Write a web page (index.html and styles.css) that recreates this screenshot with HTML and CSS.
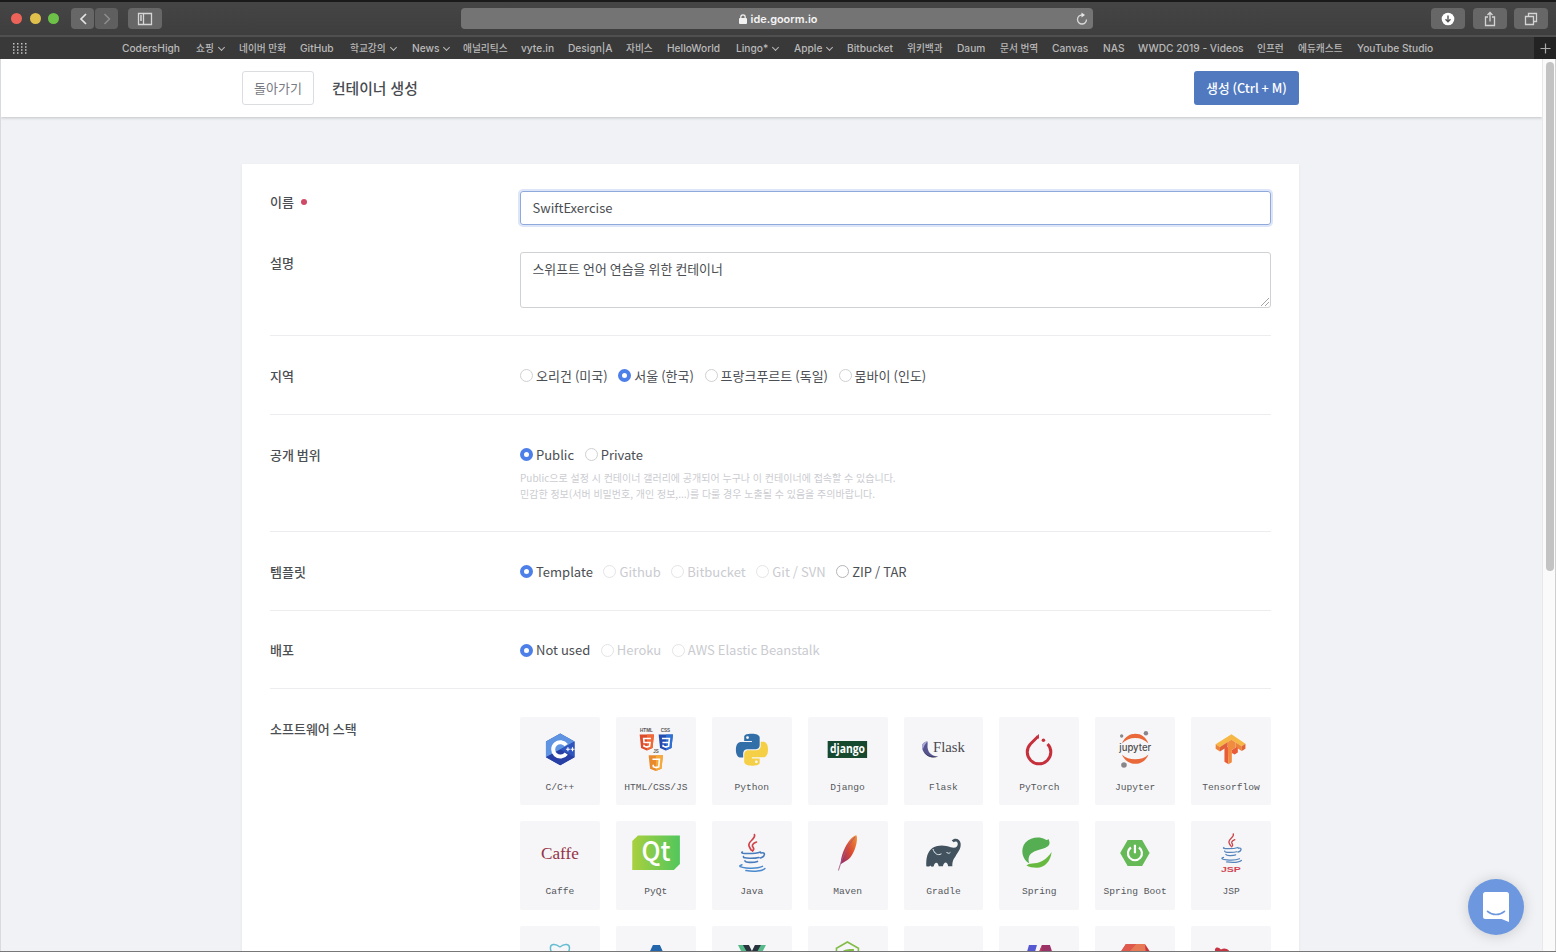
FILE: index.html
```html
<!DOCTYPE html>
<html lang="ko">
<head>
<meta charset="utf-8">
<title>컨테이너 생성</title>
<link rel="stylesheet" href="styles.css">
</head>
<body>
<div class="window">
  <div class="toolbar">
    <div class="lights"><i class="light red"></i><i class="light yellow"></i><i class="light green"></i></div>
    <div class="nav">
      <span class="tbtn nav-btn"><svg width="22" height="20" viewBox="0 0 22 20"><path d="M14 5l-5 5 5 5" fill="none" stroke="#e4e4e4" stroke-width="1.7"/></svg></span>
      <span class="tbtn nav-btn"><svg width="22" height="20" viewBox="0 0 22 20"><path d="M8.500 5l5 5-5 5" fill="none" stroke="#8d8d8d" stroke-width="1.5"/></svg></span>
    </div>
    <span class="tbtn side-btn"><svg width="16" height="14" viewBox="0 0 16 14" fill="none" stroke="#d6d6d6"><path d="M1.500 1.500h13v11h-13zM6.500 1.500v11M3 4h2M3 6h2M3 8h2" stroke-width="1.300"/></svg></span>
    <div class="address">
      <span class="url"><svg width="8" height="10" viewBox="0 0 8 10"><rect y="4" width="8" height="6" rx="1" fill="#f2f2f2"/><path d="M1.800 4.500V3a2.200 2.200 0 0 1 4.400 0v1.500" fill="none" stroke="#f2f2f2" stroke-width="1.200"/></svg>ide.goorm.io</span>
      <svg class="reload" width="12" height="14" viewBox="0 0 12 14"><path d="M10.500 7.500A4.500 4.500 0 1 1 6 3h1" fill="none" stroke="#d8d8d8" stroke-width="1.300"/><path d="M5.500.5L9 3 5.500 5.500z" fill="#e6e6e6"/></svg>
    </div>
    <div class="tools">
      <span class="tbtn tool"><svg width="14" height="14" viewBox="0 0 14 14"><circle cx="7" cy="7" r="6.300" fill="#fff"/><path d="M7 3.500v6M4.500 7.300L7 9.800l2.500-2.500" fill="none" stroke="#555" stroke-width="1.400"/></svg></span>
      <span class="tbtn tool"><svg width="14" height="16" viewBox="0 0 14 16" fill="none" stroke="#d4d4d4" stroke-width="1.300"><path d="M5 6H2.500v8.500h9V6H9M7 10.500V1.500M4.500 4L7 1.500 9.500 4"/></svg></span>
      <span class="tbtn tool"><svg width="14" height="14" viewBox="0 0 14 14" fill="none" stroke="#d4d4d4" stroke-width="1.300"><path d="M1.500 4.500h8v8h-8zM4.500 4.500v-3h8v8h-3"/></svg></span>
    </div>
  </div>

  <div class="bookbar">
    <svg class="dots" width="15" height="11" viewBox="0 0 15 11"><path d="M1 .8h14M1 3.900h14M1 7h14M1 10.100h14" stroke="#c4c4c4" stroke-width="1.500" stroke-dasharray="1.500 2.500"/></svg>
    <nav class="bookmarks">
      <span>CodersHigh</span><span class="ko">쇼핑<b class="chev"></b></span><span class="ko">네이버 만화</span><span>GitHub</span><span class="ko">학교강의<b class="chev"></b></span><span>News<b class="chev"></b></span><span class="ko">애널리틱스</span><span>vyte.in</span><span>Design|A</span><span class="ko">자비스</span><span>HelloWorld</span><span>Lingo*<b class="chev"></b></span><span>Apple<b class="chev"></b></span><span>Bitbucket</span><span class="ko">위키백과</span><span>Daum</span><span class="ko">문서 번역</span><span>Canvas</span><span>NAS</span><span>WWDC 2019 - Videos</span><span class="ko">인프런</span><span class="ko">에듀캐스트</span><span>YouTube Studio</span>
    </nav>
    <span class="newtab"><svg width="11" height="11" viewBox="0 0 11 11"><path d="M5.500.5v10M.5 5.500h10" stroke="#aaa" stroke-width="1.200"/></svg></span>
  </div>

  <div class="viewport">
    <div class="page">
      <header class="header">
        <button class="back">돌아가기</button>
        <h1 class="title">컨테이너 생성</h1>
        <button class="create">생성 (Ctrl + M)</button>
      </header>

      <main class="card">
        <section class="basic">
          <div class="row name-row"><label class="label">이름<i class="req"></i></label><div class="input focus">SwiftExercise</div></div>
          <div class="row"><label class="label">설명</label><div class="input area">스위프트 언어 연습을 위한 컨테이너<svg class="grip" width="8" height="8" viewBox="0 0 8 8"><path d="M0 8l8-8M4 8l4-4" stroke="#999" stroke-width=".9"/></svg></div></div>
        </section>
        <section class="row option region">
          <label class="label">지역</label>
          <div class="radios"><span class="radio">오리건 (미국)</span><span class="radio on">서울 (한국)</span><span class="radio">프랑크푸르트 (독일)</span><span class="radio">뭄바이 (인도)</span></div>
        </section>
        <section class="row option visibility">
          <label class="label">공개 범위</label>
          <div>
            <div class="radios"><span class="radio on">Public</span><span class="radio">Private</span></div>
            <p class="help">Public으로 설정 시 컨테이너 갤러리에 공개되어 누구나 이 컨테이너에 접속할 수 있습니다.<br>민감한 정보(서버 비밀번호, 개인 정보,...)를 다룰 경우 노출될 수 있음을 주의바랍니다.</p>
          </div>
        </section>
        <section class="row option">
          <label class="label">템플릿</label>
          <div class="radios"><span class="radio on">Template</span><span class="radio off">Github</span><span class="radio off">Bitbucket</span><span class="radio off">Git / SVN</span><span class="radio strong">ZIP / TAR</span></div>
        </section>
        <section class="row option">
          <label class="label">배포</label>
          <div class="radios"><span class="radio on">Not used</span><span class="radio off">Heroku</span><span class="radio off">AWS Elastic Beanstalk</span></div>
        </section>
        <section class="row stack">
          <label class="label">소프트웨어 스택</label>
          <div class="tiles">
            <div class="tile"><svg class="logo" viewBox="0 0 80 60">
              <path d="M40.300 16.500L54.600 24.500v15.800L40.300 48.300 26 40.300V24.500z" fill="#2c4fae"/>
              <path d="M40.300 16.500L54.600 24.500 26 40.300V24.500z" fill="#5f94e2"/>
              <path d="M54.600 24.500v15.800L40.300 32.500z" fill="#2f55bd"/><path d="M26 40.300l14.300-7.800 14.300 7.800-14.300 8z" fill="#2840a5"/>
              <path d="M46.300 28.200a7.200 7.200 0 1 0 0 8.400" fill="none" stroke="#fff" stroke-width="4"/>
              <path d="M46 32.300h4M48 30.300v4M50.600 32.300h4M52.600 30.300v4" stroke="#fff" stroke-width="1.100"/></svg><span>C/C++</span></div>
            <div class="tile"><svg class="logo" viewBox="0 0 80 60">
              <text x="30.500" y="14.500" class="mini" textLength="13" lengthAdjust="spacingAndGlyphs">HTML</text><text x="49.500" y="14.500" class="mini" textLength="9.500" lengthAdjust="spacingAndGlyphs">CSS</text><text x="40" y="36.500" class="mini">JS</text>
              <path d="M23.700 17.500H38l-1.400 13.600-5.800 2.300-5.700-2.300z" fill="#dd4b2b"/><path d="M31 17.500h7l-1.400 13.600-5.600 2.300z" fill="#ef6a38"/>
              <path d="M35 21.500h-7.300l.4 4h6l-.5 3.700-2.800.9-2.700-.9-.1-1.400" fill="none" stroke="#fff" stroke-width="1.600"/>
              <path d="M42.700 17.500H57l-1.400 13.600-5.800 2.300-5.700-2.300z" fill="#244bb0"/><path d="M50 17.500h7l-1.400 13.600-5.600 2.300z" fill="#2f70d5"/>
              <path d="M46 21.500h7.500l-.8 7.700-2.800.9-2.700-.9-.1-1.400M46.500 25.500H53" fill="none" stroke="#fff" stroke-width="1.600"/>
              <path d="M32.700 38.300H47l-1.400 13.500-5.800 2.300-5.700-2.300z" fill="#e88b2e"/><path d="M40 38.300h7l-1.400 13.500-5.600 2.300z" fill="#f6aa3c"/>
              <path d="M36.500 42.300h7l-.7 7.500-2.700.8-2.700-.8-.1-2" fill="none" stroke="#fff" stroke-width="1.600"/></svg><span>HTML/CSS/JS</span></div>
            <div class="tile"><svg class="logo" viewBox="0 0 80 60"><g transform="translate(24 16.700) scale(1.333)">
              <path fill="#326fa8" d="M14.250.18l.9.2.73.26.59.3.45.32.34.34.25.34.16.33.1.3.04.26.02.2-.01.13V8.500l-.05.63-.13.55-.21.46-.26.38-.3.31-.33.25-.35.19-.35.14-.33.1-.3.07-.26.04-.21.02H8.770l-.69.05-.59.14-.5.22-.41.27-.33.32-.27.35-.2.36-.15.37-.1.35-.07.32-.04.27-.02.21v3.060H3.170l-.21-.03-.28-.07-.32-.12-.35-.18-.36-.26-.36-.36-.35-.46-.32-.59-.28-.73-.21-.88-.14-1.050-.05-1.230.06-1.220.16-1.040.24-.87.32-.71.36-.57.4-.44.42-.33.42-.24.4-.16.36-.1.32-.05.24-.01h.16l.06.01h8.160v-.83H6.180l-.01-2.750-.02-.37.05-.34.11-.31.17-.28.25-.26.31-.23.38-.2.44-.18.51-.15.58-.12.64-.1.71-.06.77-.04.84-.02 1.270.05zm-6.300 1.980l-.23.33-.08.41.08.41.23.34.33.22.41.09.41-.09.33-.22.23-.34.08-.41-.08-.41-.23-.33-.33-.22-.41-.09-.41.09z"/>
              <path transform="rotate(180 12 12)" fill="#f5cf45" d="M14.250.18l.9.2.73.26.59.3.45.32.34.34.25.34.16.33.1.3.04.26.02.2-.01.13V8.500l-.05.63-.13.55-.21.46-.26.38-.3.31-.33.25-.35.19-.35.14-.33.1-.3.07-.26.04-.21.02H8.770l-.69.05-.59.14-.5.22-.41.27-.33.32-.27.35-.2.36-.15.37-.1.35-.07.32-.04.27-.02.21v3.060H3.170l-.21-.03-.28-.07-.32-.12-.35-.18-.36-.26-.36-.36-.35-.46-.32-.59-.28-.73-.21-.88-.14-1.050-.05-1.230.06-1.220.16-1.040.24-.87.32-.71.36-.57.4-.44.42-.33.42-.24.4-.16.36-.1.32-.05.24-.01h.16l.06.01h8.160v-.83H6.180l-.01-2.750-.02-.37.05-.34.11-.31.17-.28.25-.26.31-.23.38-.2.44-.18.51-.15.58-.12.64-.1.71-.06.77-.04.84-.02 1.270.05zm-6.300 1.980l-.23.33-.08.41.08.41.23.34.33.22.41.09.41-.09.33-.22.23-.34.08-.41-.08-.41-.23-.33-.33-.22-.41-.09-.41.09z"/></g></svg><span>Python</span></div>
            <div class="tile"><svg class="logo" viewBox="0 0 80 60"><rect x="19.700" y="24" width="39.500" height="17" fill="#17492f"/><text x="39.500" y="35.800" class="dj" textLength="35" lengthAdjust="spacingAndGlyphs">django</text></svg><span>Django</span></div>
            <div class="tile"><svg class="logo" viewBox="0 0 80 60"><path d="M23.500 24.500c-5 .5-6.500 4-4.800 8.500 2 5 7 8.500 15.500 6.500-6.500-.3-9.300-3.500-10.300-7.200-.8-3 .1-5.500-.4-7.800z" fill="#56538f"/><path d="M23.500 24.500c-5 .5-6.500 4-4.800 8.500 1-3.500 2.500-6 4.800-8.500z" fill="#a9a8d8"/><path d="M20 35c3 4 7.500 5.500 14.200 4.500-4 2-10.500 1.500-14.200-4.500z" fill="#292a4a"/><text x="29" y="35" class="fl" textLength="32" lengthAdjust="spacingAndGlyphs">Flask</text></svg><span>Flask</span></div>
            <div class="tile"><svg class="logo" viewBox="0 0 80 60"><path d="M39 19.500L31.500 27a11.800 11.800 0 1 0 17.200 0" fill="none" stroke="#c6303c" stroke-width="3"/><path d="M37.300 19.500l2.700-2.500v5z" fill="#c6303c"/><circle cx="44.500" cy="23.300" r="1.800" fill="#c6303c"/></svg><span>PyTorch</span></div>
            <div class="tile"><svg class="logo" viewBox="0 0 80 60"><path d="M27 26.500c5-13 22-13 26.500 0-6.500-7.500-20-7.500-26.500 0zM27 37.500c5 12.500 22 12.500 26.500 0-6.500 6.500-20 6.500-26.500 0z" fill="#e9693a"/><text x="40.300" y="34" class="ju" textLength="32" lengthAdjust="spacingAndGlyphs">jupyter</text><g fill="#88868b"><circle cx="26.700" cy="19" r="1.700"/><circle cx="51" cy="16.200" r="2.200"/><circle cx="29" cy="48" r="2.800"/></g></svg><span>Jupyter</span></div>
            <div class="tile"><svg class="logo" viewBox="0 0 80 60">
              <path d="M24.700 27.300L40.500 17.300l14 9.500-3.700 2.400-10.300-6.500-11.500 7.300z" fill="#f6b744"/>
              <path d="M24.700 27.300L29 30v4.500l-4.300-2.700z" fill="#ed8338"/><path d="M29 30l7.800-5v4.500L29 34.500z" fill="#df6239"/>
              <path d="M44.500 25.200l6.300 4v4.800l-6.300-4z" fill="#ed8338"/><path d="M50.800 29.200l3.700-2.400v4.900L50.800 34z" fill="#e0633a"/>
              <path d="M33.500 28.500l4 2v16.800l-4-2.600z" fill="#e85d37"/><path d="M36.800 25l3.700-2.300 4 2.500v5.500l-3.600 2v12.500l-3.400 2.100z" fill="#f18b3e"/><path d="M40.900 33l4.700-3 1.300 1v4.500l-3.200 2-2.800-1.500z" fill="#e95c3a"/></svg><span>Tensorflow</span></div>

            <div class="tile"><svg class="logo" viewBox="0 0 80 60"><text x="40" y="38" class="caffe" textLength="38" lengthAdjust="spacingAndGlyphs">Caffe</text></svg><span>Caffe</span></div>
            <div class="tile"><svg class="logo" viewBox="0 0 80 60"><defs><linearGradient id="qt"><stop offset="0" stop-color="#a9d03e"/><stop offset="1" stop-color="#52c65c"/></linearGradient></defs><path d="M22 14.500h42v28.500l-6 6H16.300V20z" fill="url(#qt)"/><text x="40" y="40.500" class="qt" textLength="29" lengthAdjust="spacingAndGlyphs">Qt</text></svg><span>PyQt</span></div>
            <div class="tile"><svg class="logo" viewBox="0 0 80 60"><g fill="none" stroke-linecap="round"><path d="M42.500 13.500c2 5-8.500 7-5 12.500l1.700 3M44.500 21c-5 2-4.500 4-3.200 5.500 1 1.300.3 2.500-.8 3.500" stroke="#d1434b" stroke-width="1.700"/><path d="M30.500 31c-4 2 12 2.200 18 0M31.500 35.500c-1 2.500 11.500 2 15.500 1M33 39.800c0 2 9 2 12.500.6M49 32c5-1.500 4.500 3.500-.5 5" stroke="#497cbd" stroke-width="1.600"/><path d="M30 43.700c-9 3 13.500 5 20.500 1.700M34 49.600c8 1.200 17 .5 19-2" stroke="#4b8ace" stroke-width="1.500"/></g></svg><span>Java</span></div>
            <div class="tile"><svg class="logo" viewBox="0 0 80 60"><defs><linearGradient id="mv" x1="1" y1="0" x2="0" y2="1"><stop offset="0" stop-color="#f29436"/><stop offset=".5" stop-color="#d84932"/><stop offset="1" stop-color="#8c2c72"/></linearGradient></defs><path d="M48.500 14.200c2 4-1.500 19.500-8.500 24.500l-7 4.300c-.8-8 7-26.500 15.500-28.800z" fill="url(#mv)"/><path d="M47 16c-7 8.500-12 18-16.500 33.500" fill="none" stroke="#a45a80" stroke-width=".9"/></svg><span>Maven</span></div>
            <div class="tile"><svg class="logo" viewBox="0 0 80 60"><path d="M22.300 45.300c-.3-9 1.200-14.500 6.500-18.500 6-3.500 12.500-2.700 18-.5 5 1.500 7.500-1 7-3.800-.3-2-2.500-2.500-4-1.200l-2-1.800c3.500-3.500 8.300-1.300 8.900 2.800.8 6-3.200 9.200-5.200 13.200-2.500 3.500-3 5-3.100 9.800h-4.200c-.7-5-4.200-5-5.200 0h-4.200c-.8-5-4.300-4.500-5 0-1.500.8-2.500.5-3.300-.8-1 1.500-2.500 1-4.200.8z" fill="#42535f"/><path d="M29 28c1.500 4.500 4.500 7 8.500 4.800M42.500 31c1 1.500 2.800 1.800 4 .3" fill="none" stroke="#e8edf0" stroke-width="1"/></svg><span>Gradle</span></div>
            <div class="tile"><svg class="logo" viewBox="0 0 80 60"><path d="M49.500 18c2.500 5 1 7.500-5 9.500-7 2-13 3.500-14.500 8.500-.7 2.500-.5 4.500.5 6.500-7.500-4-9.500-14.500-4-21 5.500-6 15-6 19.500-3.200 1.500.9 2.500.8 3.500-.3z" fill="#55ae51"/><path d="M52.700 31c-.8 9-7 15.800-14.700 15.800-4.500 0-8-1-10.500-2.300 2.500-2 5-2 8-2.200 7-.5 12.500-4.500 17.200-11.300z" fill="#67b940"/></svg><span>Spring</span></div>
            <div class="tile"><svg class="logo" viewBox="0 0 80 60"><path d="M32.700 19h14.500L54.700 32l-7.500 13H32.700L25.200 32z" fill="#65b956"/><path d="M36 26.500a7 7 0 1 0 8 0M40 23.800v8.500" fill="none" stroke="#fff" stroke-width="2.200"/></svg><span>Spring Boot</span></div>
            <div class="tile"><svg class="logo" viewBox="0 0 80 60"><g transform="translate(9.200 2.300) scale(.78)" fill="none" stroke-linecap="round"><path d="M42.500 13.500c2 5-8.500 7-5 12.500l1.700 3M44.500 21c-5 2-4.500 4-3.200 5.500 1 1.300.3 2.500-.8 3.500" stroke="#c9474d" stroke-width="1.700"/><path d="M30.500 31c-4 2 12 2.200 18 0M31.500 35.500c-1 2.500 11.500 2 15.500 1M33 39.800c0 2 9 2 12.500.6M49 32c5-1.500 4.500 3.500-.5 5M30 43.700c-9 3 13.500 5 20.500 1.700M34 49.600c8 1.200 17 .5 19-2" stroke="#5484bb" stroke-width="1.600"/></g><text x="40" y="51" class="jsp" textLength="20" lengthAdjust="spacingAndGlyphs">JSP</text></svg><span>JSP</span></div>

            <div class="tile"><svg class="logo" viewBox="0 0 80 60"><g fill="none" stroke="#62bdd0" stroke-width="1.500"><path d="M40 21c-5-4-10-3-9.500 1.500C31 28 37 38 44 43M40 21c5-4 10-3 9.500 1.500C49 28 43 38 36 43"/></g></svg></div>
            <div class="tile"><svg class="logo" viewBox="0 0 80 60"><path d="M37 19h7l13 29h-9L40 30l-8 18h-9z" fill="#2366ac"/></svg></div>
            <div class="tile"><svg class="logo" viewBox="0 0 80 60"><path d="M26 19h8l6 9 6-9h8L40 46z" fill="#55b98a"/><path d="M31 19h6l3 6 3-6h6L40 35z" fill="#29343e"/></svg></div>
            <div class="tile"><svg class="logo" viewBox="0 0 80 60"><path d="M39.500 16l11 6.300v12.700l-11 6.300-11-6.300V22.300z" fill="none" stroke="#83bc47" stroke-width="1.600"/><path d="M34 26c2-3 8-3 12-3v8h-9z" fill="#83bc47"/></svg></div>
            <div class="tile"></div>
            <div class="tile"><svg class="logo" viewBox="0 0 80 60"><path d="M30 19h8L32 40h-8z" fill="#5558d0"/><path d="M43 19h8l3 9-4 12h-9l-3-9z" fill="#9b3268"/><path d="M43 19l-5 12 3 9z" fill="#c73e5f"/></svg></div>
            <div class="tile"><svg class="logo" viewBox="0 0 80 60"><path d="M31 18h19l6 9-14 18L25 27z" fill="#c8343d"/><path d="M31 18h10l-8 9h-8z" fill="#df5a4c"/><path d="M41 18h9l1 9H33z" fill="#e77956"/></svg></div>
            <div class="tile"><svg class="logo" viewBox="0 0 80 60"><path d="M24 23.500c1-3 4-2 6 0 3-2 6-1 8 1l-2 12H25z" fill="#c63442"/></svg></div>
          </div>
        </section>
      </main>

      <div class="chat"><svg width="28" height="32" viewBox="0 0 28 32"><path d="M3.500 1h21A2.500 2.500 0 0 1 27 3.500V31l-7.500-3h-16A2.500 2.500 0 0 1 1 25.500v-22A2.500 2.500 0 0 1 3.500 1z" fill="#fff"/><path d="M5.500 20.300c5 4.200 12 4.200 17 0" fill="none" stroke="#6d98df" stroke-width="1.600" stroke-linecap="round"/></svg></div>
    </div>
    <div class="scroll"><div class="thumb"></div></div>
  </div>
</div>
</body>
</html>
```
FILE: styles.css
```css
*, *::before { box-sizing: border-box; }
body { margin: 0; background: #f0f2f6; }
.window {
  width: 1556px; height: 952px; overflow: hidden;
  display: flex; flex-direction: column;
  border-top: 2px solid #1a1a1a; border-bottom: 1px solid #777;
  font-family: "Noto Sans CJK KR", "Noto Sans", sans-serif;
  color: #4b4e52;
}
.window svg { display: block; flex: none; }

.toolbar {
  height: 33px; flex: none; display: flex; align-items: center;
  padding: 0 8px 0 11px;
  background: linear-gradient(#454545, #3e3e3e);
}
.lights { display: flex; gap: 7.500px; width: 60px; }
.light { width: 11px; height: 11px; border-radius: 50%; }
.red { background: #ec6459; }
.yellow { background: #e0c04c; }
.green { background: #6dc148; }
.tbtn { height: 21px; border-radius: 4px; background: #676767; display: flex; align-items: center; justify-content: center; }
.nav { display: flex; gap: 1px; }
.nav-btn { width: 23px; }
.nav-btn + .nav-btn { background: #5f5f5f; }
.side-btn { width: 34px; margin-left: 10px; }
.address {
  width: 632px; height: 21px; margin-left: 299px; border-radius: 4px; background: #747474;
  display: grid; grid-template-columns: 1fr auto; align-items: center; padding-right: 5px;
}
.url {
  display: flex; gap: 4px; align-items: center; justify-content: center; padding: 1px 0 0 19px;
  font: 600 10.900px Inter, sans-serif; color: #f4f4f4;
}
.tools { display: flex; gap: 7.500px; margin-left: auto; }
.tool { width: 34px; }

.bookbar {
  height: 24px; flex: none; display: flex; align-items: center;
  background: #393939; border-top: 2px solid #4f4f4f; padding-left: 12px;
}
.dots { margin-top: 1px; }
.bookmarks {
  margin-left: 95px; display: grid; white-space: nowrap; align-items: baseline;
  grid-template-columns: 74px 43px 61px 50px 62px 51px 58px 47px 58px 41px 69px 58px 53px 60px 50px 43px 52px 51px 35px 119px 41px 59px 76px;
  font: 500 10.200px/20px Inter, "Noto Sans CJK KR", sans-serif; color: #b9b9b9;
}
.ko { font-size: 9.700px; }
.chev {
  display: inline-block; width: 5px; height: 5px; margin: 0 1px 2px 5px;
  border: solid #b9b9b9; border-width: 0 1.500px 1.500px 0; transform: rotate(45deg);
}
.newtab { margin-left: auto; width: 22px; height: 22px; background: #232323; display: flex; align-items: center; justify-content: center; }

.viewport { flex: 1; min-height: 0; display: flex; }
.page { flex: 1; min-width: 0; overflow: hidden; background: #f0f2f6; position: relative; border-left: 1px solid #d9dadd; }
.header {
  height: 58px; padding: 0 243px 0 241px; display: flex; align-items: center;
  background: #fff; box-shadow: 0 1px 3px rgba(0, 0, 0, .2);
}
.back, .create { font-family: inherit; font-size: 13px; height: 34px; border-radius: 3px; padding: 0; white-space: nowrap; line-height: 20px; }
.back { width: 72px; border: 1px solid #dcdde0; background: #fff; color: #777a80; }
.title { margin: 0 0 0 18px; font-size: 14.800px; font-weight: 500; line-height: 22px; color: #484b50; }
.create { margin-left: auto; width: 105px; border: 0; background: #5079c0; color: #fff; font-weight: 500; font-size: 12.700px; word-spacing: -.7px; }

.card {
  width: 1057px; height: 1000px; margin: 47px 0 0 241px; padding: 27px 28px;
  background: #fff; box-shadow: 0 1px 3px rgba(0, 0, 0, .06);
}
.row { display: grid; grid-template-columns: 250px 751px; align-items: start; }
.label { font-size: 13px; line-height: 20px; font-weight: 500; color: #4b4e52; word-spacing: -.7px; }
.basic .label { padding-top: 1px; }
.name-row { margin-bottom: 27px; }
.req { display: inline-block; width: 6px; height: 6px; margin: 0 0 2px 7px; border-radius: 50%; background: #cf4a66; }
.input {
  height: 34px; border: 1px solid #d0d1d4; border-radius: 3px; padding: 6px 11.500px;
  font-size: 13px; line-height: 20px; color: #4b4e52;
}
.focus { border-color: #8fa9dc; box-shadow: 0 0 0 2px #dde6f8; }
.area { height: 56px; display: flex; justify-content: space-between; padding: 6px 1px 1px 11.500px; font-size: 12.900px; word-spacing: -.5px; }
.grip { align-self: flex-end; }
.basic { padding-bottom: 27px; }
.option { border-top: 1px solid #ededf0; padding-top: 29.500px; height: 78.700px; }
.region { height: 79px; }
.visibility { height: 117px; }
.radios { display: flex; gap: 10.600px; font-size: 13px; line-height: 20px; word-spacing: -.6px; }
.radio { display: flex; align-items: center; gap: 3px; white-space: nowrap; }
.radio::before { content: ""; width: 13px; height: 13px; border-radius: 50%; border: 1px solid #cfd0d3; background: #fff; }
.on::before { border: 4.500px solid #4d7fe8; }
.off { color: #cacbd0; }
.off::before { border-color: #e4e4e7; }
.strong::before { border-color: #b4b5b9; }
.help { margin: 5px 0 0; font-size: 10px; line-height: 16.500px; color: #cbccd1; white-space: nowrap; }
.stack { border-top: 1px solid #ededf0; padding-top: 27.500px; }
.stack .label { padding-top: 2px; }
.tiles { display: grid; grid-template-columns: repeat(8, minmax(0, 1fr)); gap: 16px; }
.tile {
  height: 88.500px; border-radius: 2px; background: #f6f6f8; text-align: center;
  font: 9.600px/22px "Liberation Mono", monospace; color: #55575b; white-space: nowrap;
}
.logo { width: 100%; height: 60px; }
.mini { font: 700 4.500px "Liberation Sans", sans-serif; fill: #555; text-anchor: middle; }
.dj { font: 700 11.500px "Open Sans", sans-serif; fill: #fff; text-anchor: middle; }
.fl { font: 14.500px "Liberation Serif", serif; fill: #4a4a50; }
.ju { font: 500 9.500px Inter, sans-serif; fill: #4e4e4e; text-anchor: middle; }
.caffe { font: 17px "Liberation Serif", serif; fill: #943347; text-anchor: middle; }
.qt { font: 500 27px "Noto Sans CJK KR", sans-serif; fill: #fff; text-anchor: middle; }
.jsp { font: 700 7.500px "Liberation Sans", sans-serif; fill: #d04453; text-anchor: middle; }

.chat {
  position: absolute; right: 18px; bottom: 16px; width: 56px; height: 56px; border-radius: 50%;
  background: #6d98df; display: flex; align-items: center; justify-content: center;
  box-shadow: 0 1px 14px rgba(0, 0, 0, .16);
}
.scroll { width: 14px; background: #fafafa; border-left: 1px solid #e8e8e8; border-right: 1px solid #cfcfcf; padding: 3px 2px 0 3px; }
.thumb { width: 8px; height: 509px; border-radius: 4px; background: #c3c3c3; }
```
